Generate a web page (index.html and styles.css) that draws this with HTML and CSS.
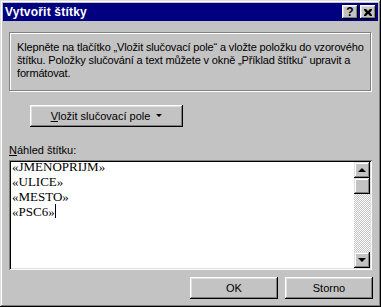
FILE: index.html
```html
<!DOCTYPE html>
<html lang="cs">
<head>
<meta charset="utf-8">
<title>Vytvořit štítky</title>
<link rel="stylesheet" href="styles.css">
</head>
<body>
<div class="window">
  <div class="titlebar">
    <span class="title">Vytvořit štítky</span>
    <div class="tbtns">
      <span class="tbtn tbtn-help">?</span>
      <span class="tbtn">
        <svg width="8" height="7" viewBox="0 0 8 7"><path d="M0 0h2l2 2 2-2h2v1l-2 2.5 2 2.5v1h-2l-2-2-2 2h-2v-1l2-2.5-2-2.5z" fill="#000"/></svg>
      </span>
    </div>
  </div>
  <div class="content">
    <div class="info">
      <p>Klepněte na tlačítko „Vložit slučovací pole“ a vložte položku do vzorového<br>štítku. Položky slučování a text můžete v okně „Příklad štítku“ upravit a<br>formátovat.</p>
    </div>
    <div class="insert-row">
      <button class="btn btn-insert"><span><u>V</u>ložit slučovací pole</span><span class="tri-down"></span></button>
    </div>
    <div class="label"><u>N</u>áhled štítku:</div>
    <div class="preview">
      <div class="preview-text">
        <div>«JMENOPRIJM»</div>
        <div>«ULICE»</div>
        <div>«MESTO»</div>
        <div>«PSC6»<span class="cursor"></span></div>
      </div>
      <div class="vscroll">
        <div class="sbtn"><span class="arrow-up"></span></div>
        <div class="thumb"></div>
        <div class="track"></div>
        <div class="sbtn"><span class="arrow-down"></span></div>
      </div>
    </div>
    <div class="actions">
      <button class="btn btn-action">OK</button>
      <button class="btn btn-action">Storno</button>
    </div>
  </div>
</div>
</body>
</html>
```
FILE: styles.css
```css
* { box-sizing: border-box; }
html, body { margin: 0; padding: 0; }
body {
  width: 381px;
  height: 307px;
  font-family: "Liberation Sans", Arial, sans-serif;
  font-size: 11px;
  color: #000;
  background: #c0c0c0;
}
.window {
  width: 381px;
  height: 307px;
  padding: 3px;
  background: #c3c3c3;
  box-shadow: inset -1px -1px #000, inset 1px 1px #dfdfdf, inset -2px -2px #808080, inset 2px 2px #fff;
  display: flex;
  flex-direction: column;
}
.titlebar {
  height: 18px;
  background: #000080;
  display: flex;
  align-items: center;
  justify-content: space-between;
  padding: 0 2px 0 2px;
}
.title {
  color: #fff;
  font-weight: bold;
  font-size: 12px;
  letter-spacing: 0.2px;
}
.tbtns {
  display: flex;
  gap: 2px;
}
.tbtn {
  width: 16px;
  height: 14px;
  background: #c3c3c3;
  box-shadow: inset -1px -1px #000, inset 1px 1px #fff, inset -2px -2px #808080, inset 2px 2px #dfdfdf;
  display: flex;
  align-items: center;
  justify-content: center;
  font-weight: bold;
  font-size: 12px;
  line-height: 14px;
}
.tbtn svg { display: block; }
.content {
  flex: 1;
  display: flex;
  flex-direction: column;
  padding: 11px 6px 0 6px;
}
.info {
  width: 362px;
  height: 59px;
  border: 1px solid #808080;
  box-shadow: inset 1px 1px #fff, 1px 1px #fff;
  padding: 8px 0 0 7px;
}
.info p {
  margin: 0;
  line-height: 13px;
  white-space: nowrap;
  letter-spacing: -0.15px;
}
.insert-row {
  margin-top: 14px;
  padding-left: 21px;
}
.btn {
  font-family: "Liberation Sans", Arial, sans-serif;
  font-size: 11px;
  color: #000;
  background: #c3c3c3;
  border: none;
  padding: 0;
  box-shadow: inset -1px -1px #000, inset 1px 1px #fff, inset -2px -2px #808080, inset 2px 2px #dfdfdf;
  display: flex;
  align-items: center;
  justify-content: center;
}
.btn-insert {
  width: 153px;
  height: 22px;
  gap: 6px;
}
.tri-down {
  width: 0;
  height: 0;
  border-left: 3px solid transparent;
  border-right: 3px solid transparent;
  border-top: 3px solid #000;
  margin-top: -2px;
}
.label {
  margin-top: 17px;
  line-height: 13px;
  height: 16px;
}
.preview {
  width: 363px;
  height: 110px;
  background: #fff;
  box-shadow: inset 1px 1px #808080, inset -1px -1px #fff, inset 2px 2px #000, inset -2px -2px #dfdfdf;
  padding: 2px;
  display: flex;
}
.preview-text {
  flex: 1;
  margin-top: -3px;
  padding-left: 1px;
  font-family: "Liberation Serif", "Times New Roman", serif;
  font-size: 13px;
  line-height: 15px;
}
.cursor {
  display: inline-block;
  width: 1px;
  height: 14px;
  background: #000;
  vertical-align: -2px;
}
.vscroll {
  width: 16px;
  display: flex;
  flex-direction: column;
}
.sbtn, .thumb {
  width: 16px;
  height: 16px;
  background: #c3c3c3;
  box-shadow: inset -1px -1px #000, inset 1px 1px #dfdfdf, inset -2px -2px #808080, inset 2px 2px #fff;
  display: flex;
  align-items: center;
  justify-content: center;
}
.track {
  flex: 1;
  background: repeating-conic-gradient(#c3c3c3 0 25%, #fff 0 50%) 0 0 / 2px 2px;
}
.arrow-up {
  width: 0;
  height: 0;
  border-left: 4px solid transparent;
  border-right: 4px solid transparent;
  border-bottom: 4px solid #000;
}
.arrow-down {
  width: 0;
  height: 0;
  border-left: 4px solid transparent;
  border-right: 4px solid transparent;
  border-top: 4px solid #000;
}
.actions {
  margin-top: 7px;
  display: flex;
  justify-content: flex-end;
  gap: 7px;
  margin-right: -1px;
}
.btn-action {
  width: 88px;
  height: 22px;
}
```
